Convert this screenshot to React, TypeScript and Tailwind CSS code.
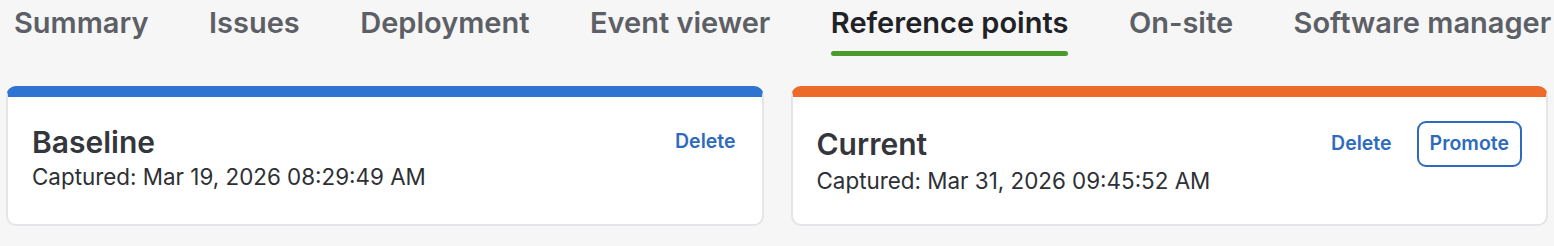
import { useState } from "react";

type RefPoint = {
  id: string;
  label: string;
  captured: string;
  accent: string;
  canPromote: boolean;
};

const tabs = [
  "Summary",
  "Issues",
  "Deployment",
  "Event viewer",
  "Reference points",
  "On-site",
  "Software manager",
];

const points: RefPoint[] = [
  {
    id: "baseline",
    label: "Baseline",
    captured: "Mar 19, 2026 08:29:49 AM",
    accent: "border-t-[#2f74d0]",
    canPromote: false,
  },
  {
    id: "current",
    label: "Current",
    captured: "Mar 31, 2026 09:45:52 AM",
    accent: "border-t-[#ec6a2a]",
    canPromote: true,
  },
];

function RefCard({ point }: { point: RefPoint }) {
  return (
    <div
      className={`rounded-[10px] border-2 border-[#e3e5e9] border-t-[11px] ${point.accent} bg-white px-6 pt-6 pb-[29px]`}
    >
      <div className="flex items-center justify-between">
        <h2 className="text-[30px] leading-[36px] font-semibold text-[#33363b]">
          {point.label}
        </h2>
        <div className="flex items-center gap-[23px]">
          <button className="h-[42px] px-[2px] text-[19.5px] font-semibold text-[#2f6bbd]">
            Delete
          </button>
          {point.canPromote && (
            <button className="h-[46px] rounded-[9px] border-2 border-[#2f6bbd] px-[11px] text-[19.5px] font-semibold text-[#2f6bbd]">
              Promote
            </button>
          )}
        </div>
      </div>
      <p className="text-[22.4px] leading-[28px] text-[#2d3035]">
        Captured: {point.captured}
      </p>
    </div>
  );
}

export default function App() {
  const [active, setActive] = useState("Reference points");

  return (
    <main
      className="min-h-[246px] w-[1554px] overflow-hidden bg-[#f6f6f6]"
      style={{ fontFamily: "Inter, 'Noto Sans', sans-serif" }}
    >
      <nav className="flex gap-[60.5px] whitespace-nowrap pl-[14px] pt-[5px]">
        {tabs.map((t) => (
          <button
            key={t}
            onClick={() => setActive(t)}
            className="flex shrink-0 flex-col"
          >
            <span
              className={`text-[29px] leading-[36px] font-semibold ${
                t === active ? "text-[#1f2226]" : "text-[#5c6066]"
              }`}
            >
              {t}
            </span>
            <span
              className={`mt-[10px] h-[5px] rounded-full ${
                t === active ? "bg-[#4b9a2c]" : "bg-transparent"
              }`}
            />
          </button>
        ))}
      </nav>

      <section className="mt-[30px] grid grid-cols-2 gap-[27px] px-[6px]">
        {points.map((p) => (
          <RefCard key={p.id} point={p} />
        ))}
      </section>
    </main>
  );
}
